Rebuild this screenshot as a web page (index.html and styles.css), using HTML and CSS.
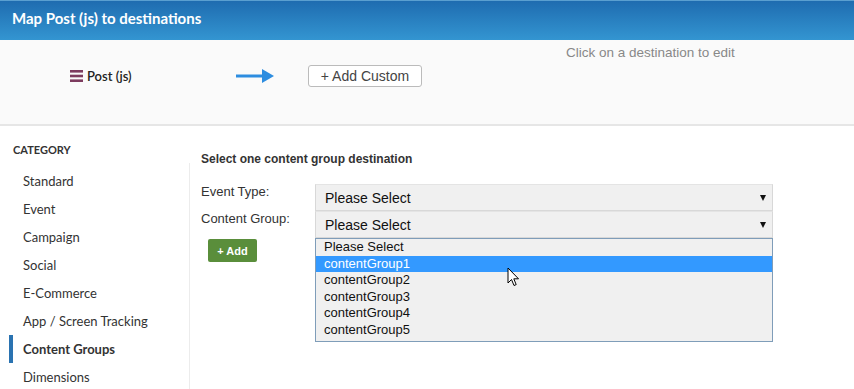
FILE: index.html
```html
<!DOCTYPE html>
<html>
<head>
  <meta name="viewport" content="width=device-width,initial-scale=1.0">
  <title>Map Post (js) to destinations</title>
  <link rel="stylesheet" href="styles.css">
</head>
<body>

  <div class="title-bar">Map Post (js) to destinations</div>

  <div class="mapping">
    <div class="source">
      <svg class="source-icon" width="13" height="12" viewBox="0 0 13 12">
        <rect x="0" y="0" width="13" height="2.6" fill="#7d3c5f"/>
        <rect x="0" y="4.7" width="13" height="2.6" fill="#7d3c5f"/>
        <rect x="0" y="9.4" width="13" height="2.6" fill="#7d3c5f"/>
      </svg>
      <span>Post (js)</span>
    </div>
    <svg class="arrow" width="38" height="14" viewBox="0 0 38 14">
      <rect x="0" y="5.5" width="28" height="3" fill="#2d8de0"/>
      <polygon points="26,0 38,7 26,14" fill="#2d8de0"/>
    </svg>
    <button class="add-custom">+ Add Custom</button>
    <div class="hint">Click on a destination to edit</div>
  </div>

  <div class="main">
    <div class="sidebar">
      <div class="sidebar-title">CATEGORY</div>
      <ul class="categories">
        <li>Standard</li>
        <li>Event</li>
        <li>Campaign</li>
        <li>Social</li>
        <li>E-Commerce</li>
        <li>App / Screen Tracking</li>
        <li class="active">Content Groups</li>
        <li>Dimensions</li>
      </ul>
    </div>

    <div class="content">
      <h3>Select one content group destination</h3>
      <div class="form">
        <label>Event Type:</label>
        <div class="select">Please Select<span class="caret"></span></div>

        <label>Content Group:</label>
        <div class="select">Please Select<span class="caret"></span></div>

        <div><button class="add-btn">+ Add</button></div>
        <div class="listbox">
          <div class="option">Please Select</div>
          <div class="option selected">contentGroup1</div>
          <div class="option">contentGroup2</div>
          <div class="option">contentGroup3</div>
          <div class="option">contentGroup4</div>
          <div class="option">contentGroup5</div>
          <svg class="cursor" width="13" height="20" viewBox="0 0 13 20">
            <path d="M1 1 L1 16 L4.5 12.5 L7 18.5 L9.2 17.6 L6.8 11.8 L11.5 11.8 Z" fill="#fff" stroke="#000" stroke-width="1" stroke-linejoin="miter"/>
          </svg>
        </div>
      </div>
    </div>
  </div>

</body>
</html>
```

FILE: styles.css
```css
body { margin: 0; font-family: "Liberation Sans", Arial, sans-serif; color: #333; background: #fff; }

.title-bar { height: 40px; box-sizing: border-box; padding: 8px 12px 0; border-top: 1px solid #5a9fd0; background: linear-gradient(#1f6cb0, #3395d1); color: #fff; font-family: Lato, "Liberation Sans", sans-serif; font-weight: bold; font-size: 15px; }

.mapping { height: 86px; box-sizing: border-box; background: #fafafa; border-bottom: 2px solid #e6e6e6; display: flex; align-items: center; padding: 0 0 12px 70px; position: relative; }
.source { width: 166px; display: flex; align-items: center; gap: 4px; font-family: Lato, "Liberation Sans", sans-serif; font-size: 13px; font-weight: 600; color: #222; }
.arrow { margin-right: 34px; }
.add-custom { width: 114px; height: 22px; padding: 0; background: #fff; border: 1px solid #bbb; border-radius: 3px; font-family: "Liberation Sans", Arial, sans-serif; font-size: 14px; color: #444; }
.hint { align-self: flex-start; margin: 5px 0 0 144px; font-size: 13.5px; color: #888; }

.main { display: flex; }
.sidebar { width: 190px; padding-top: 17px; font-family: Lato, "Liberation Sans", sans-serif; }
.sidebar-title { padding-left: 13px; font-size: 11px; font-weight: bold; color: #333; line-height: 14px; height: 20px; }
.categories { list-style: none; margin: 0; padding: 4px 0 0; border-right: 1px solid #ececec; }
.categories li { height: 28px; line-height: 28px; padding-left: 23px; font-size: 13px; color: #333; position: relative; }
.categories li.active { font-weight: bold; }
.categories li.active::before { content: ""; position: absolute; left: 9px; top: 0; width: 4px; height: 28px; background: #2a73b1; }

.content { padding: 26px 0 0 11px; }
.content h3 { margin: 0 0 18px; font-size: 12px; font-weight: bold; color: #333; line-height: 14px; }
.form { display: grid; grid-template-columns: 114px 458px; }
.form label { font-size: 13px; color: #333; line-height: 16px; }
.select { height: 27px; box-sizing: border-box; padding-left: 9px; line-height: 26px; font-size: 14px; color: #111; background: #f0f0f0; border: 1px solid #d8d8d8; border-top-color: #e4e4e4; position: relative; }
.caret { position: absolute; right: 6px; top: 10px; border-left: 3.5px solid transparent; border-right: 3.5px solid transparent; border-top: 6px solid #111; }

.add-btn { margin: 1px 0 0 7px; width: 49px; height: 23px; padding: 0; border: none; border-radius: 2px; background: #5a8e3b; color: #fff; font-family: "Liberation Sans", Arial, sans-serif; font-size: 11px; font-weight: bold; }

.listbox { border: 1px solid #7f9db9; background: #f0f0f0; padding: 0 0 2px; position: relative; }
.option { height: 16.6px; line-height: 16.6px; padding-left: 8px; font-size: 13px; color: #111; }
.option.selected { background: #3399ff; color: #fff; }
.cursor { position: absolute; left: 191px; top: 28px; }
```
